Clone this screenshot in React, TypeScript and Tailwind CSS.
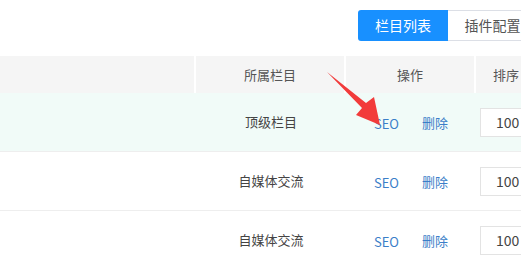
import React from 'react';

const rows = [
  { id: 1, parent: '顶级栏目', sort: 100, active: true },
  { id: 2, parent: '自媒体交流', sort: 100, active: false },
  { id: 3, parent: '自媒体交流', sort: 100, active: false },
];

export default function App() {
  return (
    <div
      className="relative w-full h-[261px] overflow-hidden bg-white text-[13px] text-[#444]"
      style={{ fontFamily: '"Noto Sans CJK SC", "Noto Sans", sans-serif' }}
    >
      <div className="w-[600px]">
        {/* Tabs */}
        <div className="h-[56px] flex items-start pl-[358px] pt-[10px]">
          <div className="flex h-[31px]">
            <button className="w-[90px] h-full bg-[#1890ff] text-white text-[14px] rounded-l-[3px]">
              栏目列表
            </button>
            <button className="w-[90px] h-full bg-white text-[#555] text-[14px] border border-l-0 border-[#dcdfe6]">
              插件配置
            </button>
          </div>
        </div>

        {/* Header */}
        <div className="flex h-[37px] bg-[#f5f5f5] text-[#555]">
          <div className="w-[196px] border-r-2 border-white"></div>
          <div className="w-[150px] border-r-2 border-white flex items-center justify-center">所属栏目</div>
          <div className="w-[130px] border-r-2 border-white flex items-center justify-center">操作</div>
          <div className="flex-1 flex items-center pl-[17px]">排序</div>
        </div>

        {/* Rows */}
        {rows.map((row) => (
          <div
            key={row.id}
            className={`flex h-[59px] border-b border-[#eeeeee] ${row.active ? 'bg-[#f1fbf8]' : 'bg-white'}`}
          >
            <div className="w-[196px]"></div>
            <div className="w-[150px] flex items-center justify-center">{row.parent}</div>
            <div className="w-[130px] flex items-center justify-center gap-[23px] text-[#3b7ec8]">
              <span className="pt-[3px]">SEO</span>
              <span className="pt-[2px]">删除</span>
            </div>
            <div className="flex-1 flex items-center pl-[4px]">
              <div className="w-[80px] h-[29px] bg-white border border-[#e3e3e3] flex items-center pl-[15px] text-[14px] text-[#444]">
                {row.sort}
              </div>
            </div>
          </div>
        ))}
      </div>

      {/* Annotation arrow */}
      <svg className="absolute left-0 top-0 pointer-events-none" width="521" height="261">
        <polygon
          points="327,72 366,103 374,97 380,125 356,115 362,108"
          fill="#f23b3b"
        />
      </svg>
    </div>
  );
}
